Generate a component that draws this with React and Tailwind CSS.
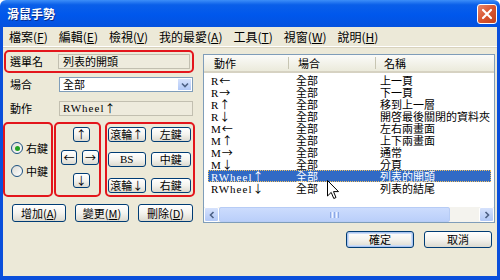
import React from 'react'

const rows = [
  ['R', '←', '全部', '上一頁'],
  ['R', '→', '全部', '下一頁'],
  ['R', '↑', '全部', '移到上一層'],
  ['R', '↓', '全部', '開啓最後關閉的資料夾'],
  ['M', '←', '全部', '左右兩畫面'],
  ['M', '↑', '全部', '上下兩畫面'],
  ['M', '→', '全部', '通常'],
  ['M', '↓', '全部', '分頁'],
  ['RWheel', '↑', '全部', '列表的開頭'],
  ['RWheel', '↓', '全部', '列表的結尾'],
]

const menus = [
  ['檔案', 'F'],
  ['編輯', 'E'],
  ['檢視', 'V'],
  ['我的最愛', 'A'],
  ['工具', 'T'],
  ['視窗', 'W'],
  ['說明', 'H'],
]

function Arrow({ children }) {
  return <span className="font-['Noto_Sans_CJK_TC',sans-serif]">{children}</span>
}

function Btn({ children, className = '', def = false }) {
  return (
    <div
      className={`flex items-center justify-center rounded-[3px] border border-[#003C74] bg-linear-to-b from-white via-[#F4F3EE] to-[#DCDAD0] text-[11px] leading-none text-black ${def ? 'shadow-[inset_0_0_0_1px_#A9C4F0,inset_0_0_0_2px_#CCDCF6]' : ''} ${className}`}
    >
      {children}
    </div>
  )
}

function Radio({ checked, label }) {
  return (
    <div className="flex items-center gap-[3px]">
      <div className="w-[12px] h-[12px] rounded-full border border-[#1C5180] bg-linear-to-br from-[#DCDBD4] to-white flex items-center justify-center">
        {checked && <div className="w-[5px] h-[5px] rounded-full bg-[#21A121]" />}
      </div>
      <span className="text-[11px] leading-none">{label}</span>
    </div>
  )
}

export default function App() {
  return (
    <div className="w-[500px] h-[280px] flex flex-col overflow-hidden relative text-black font-['Liberation_Sans','Noto_Sans_CJK_TC',sans-serif]">
      {/* title bar */}
      <div className="h-[27px] flex items-center justify-between pl-[7px] pr-[3px] bg-[linear-gradient(180deg,#3D8EF8_0%,#0A5FE9_18%,#0057EC_55%,#0451DE_100%)] rounded-t-[6px]">
        <span className="text-white font-bold text-[12px] [text-shadow:1px_1px_0_#0A2E8C] font-['Noto_Sans_CJK_TC',sans-serif]">滑鼠手勢</span>
        <div className="w-[20px] h-[20px] rounded-[3px] border border-white bg-linear-to-br from-[#E8866A] via-[#D8542F] to-[#C2421C] flex items-center justify-center">
          <svg width="12" height="12" viewBox="0 0 12 12">
            <path d="M2 2 L10 10 M10 2 L2 10" stroke="white" strokeWidth="2.2" strokeLinecap="round" />
          </svg>
        </div>
      </div>

      <div className="flex-1 flex flex-col bg-[#ECE9D8] border-x-[3px] border-b-[4px] border-[#0A4FDB]">
        {/* menu bar */}
        <div className="h-[20px] flex items-center gap-[11px] pl-[6px] text-[12px] border-b border-white shadow-[0_1px_0_#D8D2BD]">
          {menus.map(([t, k]) => (
            <span key={k} className="font-['Noto_Sans_CJK_TC',sans-serif]">
              {t}(<span className="underline">{k}</span>)
            </span>
          ))}
        </div>

        <div className="flex flex-1">
          {/* left column */}
          <div className="w-[192px] flex flex-col text-[11px] font-['Noto_Sans_CJK_TC',sans-serif]">
            <div className="mt-[3px] ml-[1px] h-[23px] w-[190px] border-2 border-[#E3161C] rounded-[5px] flex items-center pl-[4px]">
              <span className="w-[48px]">選單名</span>
              <div className="w-[132px] h-[15px] border border-[#C2BFB0] bg-[#EEEBDD] flex items-center pl-[4px]">列表的開頭</div>
            </div>

            <div className="mt-[4px] h-[15px] flex items-center pl-[7px]">
              <span className="w-[49px]">場合</span>
              <div className="w-[134px] h-[15px] border border-[#7F9DB9] bg-white flex items-center pl-[3px] justify-between">
                <span>全部</span>
                <div className="w-[15px] h-[13px] bg-linear-to-b from-[#D6E2FC] to-[#B1C8F7] border border-white flex items-center justify-center">
                  <svg width="8" height="6" viewBox="0 0 8 6">
                    <path d="M1 1.5 L4 4.5 L7 1.5" stroke="#4D6185" strokeWidth="1.6" fill="none" />
                  </svg>
                </div>
              </div>
            </div>

            <div className="mt-[9px] h-[14px] flex items-center pl-[7px]">
              <span className="w-[49px]">動作</span>
              <div className="w-[134px] h-[15px] border border-[#C2BFB0] bg-[#EEEBDD] flex items-center pl-[3px] font-['Liberation_Serif',serif] tracking-[1px]">
                RWheel<Arrow>↑</Arrow>
              </div>
            </div>

            <div className="mt-[7px] h-[75px] flex">
              <div className="w-[50px] border-2 border-[#E3161C] rounded-[5px] flex flex-col pl-[6px] pt-[18px] gap-[11px]">
                <Radio checked label="右鍵" />
                <Radio label="中鍵" />
              </div>
              <div className="ml-[1px] w-[47px] border-2 border-[#E3161C] rounded-[5px] flex flex-col pt-[3px]">
                <Btn className="ml-[17px] w-[17px] h-[15px]"><Arrow>↑</Arrow></Btn>
                <div className="flex mt-[8px] ml-[5px] gap-[5px]">
                  <Btn className="w-[17px] h-[15px]"><Arrow>←</Arrow></Btn>
                  <Btn className="w-[17px] h-[15px]"><Arrow>→</Arrow></Btn>
                </div>
                <Btn className="ml-[17px] mt-[8px] w-[17px] h-[15px]"><Arrow>↓</Arrow></Btn>
              </div>
              <div className="ml-[4px] w-[91px] border-2 border-[#E3161C] rounded-[5px] grid grid-cols-[38px_40px] gap-x-[5px] gap-y-[8px] pl-[1px] pt-[3px]">
                <Btn className="h-[15px]">滾輪<Arrow>↑</Arrow></Btn>
                <Btn className="h-[15px]">左鍵</Btn>
                <Btn className="h-[15px] font-['Liberation_Serif',serif]">BS</Btn>
                <Btn className="h-[15px]">中鍵</Btn>
                <Btn className="h-[15px]">滾輪<Arrow>↓</Arrow></Btn>
                <Btn className="h-[15px]">右鍵</Btn>
              </div>
            </div>

            <div className="mt-[7px] flex ml-[9px] gap-[9px]">
              <Btn className="w-[54px] h-[18px]">增加(<span className="underline">A</span>)</Btn>
              <Btn className="w-[54px] h-[18px]">變更(<span className="underline">M</span>)</Btn>
              <Btn className="w-[55px] h-[18px]">刪除(<span className="underline">D</span>)</Btn>
            </div>
          </div>

          {/* right column */}
          <div className="flex-1 flex flex-col">
            <div className="mt-[7px] ml-[8px] w-[292px] h-[169px] border border-[#7F9DB9] bg-white flex flex-col">
              <div className="h-[18px] flex items-center text-[11px] bg-linear-to-b from-[#FBFBF9] to-[#EBEADB] border-b-[2px] border-[#D6D2C2] font-['Noto_Sans_CJK_TC',sans-serif]">
                <div className="w-[85px] pl-[10px] border-r border-[#C7C5B2] h-[12px] flex items-center">動作</div>
                <div className="w-[87px] pl-[9px] border-r border-[#C7C5B2] h-[12px] flex items-center">場合</div>
                <div className="pl-[8px]">名稱</div>
              </div>
              <div className="flex-1 flex flex-col pt-[1px] text-[11px] leading-[12px] font-['Liberation_Serif','Noto_Sans_CJK_TC',serif]">
                {rows.map(([a, arr, b, c], i) => {
                  const sel = i === 8
                  return (
                    <div
                      key={i}
                      className={`h-[12px] ml-[4px] w-[283px] flex items-center ${sel ? 'bg-[#316AC5] text-white outline outline-dotted outline-[#F0C060] -outline-offset-1' : ''}`}
                    >
                      <div className="w-[81px] pl-[3px] tracking-[1px]">{a}<Arrow>{arr}</Arrow></div>
                      <div className="w-[87px] pl-[7px] font-['Noto_Sans_CJK_TC',sans-serif]">{b}</div>
                      <div className="pl-[4px] font-['Noto_Sans_CJK_TC',sans-serif]">{c}</div>
                    </div>
                  )
                })}
              </div>
              {/* horizontal scrollbar */}
              <div className="h-[15px] flex bg-[#F4F3EE]">
                <div className="w-[15px] h-[15px] rounded-[2px] border border-white bg-linear-to-b from-[#D6E2FC] to-[#B1C8F7] flex items-center justify-center">
                  <svg width="6" height="8" viewBox="0 0 6 8">
                    <path d="M4.5 1 L1.5 4 L4.5 7" stroke="#4D6185" strokeWidth="1.6" fill="none" />
                  </svg>
                </div>
                <div className="w-[231px] h-[15px] rounded-[2px] border border-[#B7CCF5] bg-linear-to-b from-[#CCDCFD] to-[#BACFFA] flex items-center justify-center gap-[1px]">
                  <div className="w-[1px] h-[6px] bg-[#8CA8E6]" />
                  <div className="w-[1px] h-[6px] bg-[#EEF3FF]" />
                  <div className="w-[1px] h-[6px] bg-[#8CA8E6]" />
                  <div className="w-[1px] h-[6px] bg-[#EEF3FF]" />
                  <div className="w-[1px] h-[6px] bg-[#8CA8E6]" />
                </div>
                <div className="flex-1" />
                <div className="w-[15px] h-[15px] rounded-[2px] border border-white bg-linear-to-b from-[#D6E2FC] to-[#B1C8F7] flex items-center justify-center">
                  <svg width="6" height="8" viewBox="0 0 6 8">
                    <path d="M1.5 1 L4.5 4 L1.5 7" stroke="#4D6185" strokeWidth="1.6" fill="none" />
                  </svg>
                </div>
              </div>
            </div>

            <div className="mt-[8px] flex justify-end gap-[10px] pr-[5px]">
              <Btn def className="w-[68px] h-[17px] font-['Noto_Sans_CJK_TC',sans-serif]">確定</Btn>
              <Btn className="w-[68px] h-[17px] font-['Noto_Sans_CJK_TC',sans-serif]">取消</Btn>
            </div>
          </div>
        </div>
      </div>

      {/* mouse cursor */}
      <svg className="absolute left-[327px] top-[180px]" width="13" height="20" viewBox="0 0 13 20">
        <path d="M0.5 0.5 L0.5 16 L4.2 12.4 L6.8 18.5 L9 17.5 L6.5 11.6 L11.5 11.6 Z" fill="white" stroke="black" strokeWidth="1" />
      </svg>
    </div>
  )
}
